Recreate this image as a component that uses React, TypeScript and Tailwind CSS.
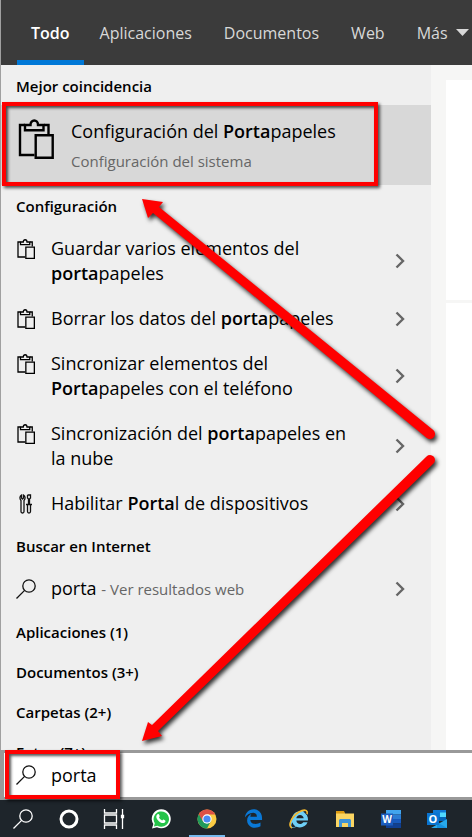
import type { ReactNode } from "react";
import { FaEdgeLegacy, FaInternetExplorer } from "react-icons/fa";

function PasteIcon({ size, weight }: { size: number; weight: number }) {
  return (
    <svg width={size * 0.9} height={size} viewBox="0 0 36 40" fill="none" stroke="#000" strokeWidth={weight} aria-hidden="true">
      <path d="M16.500 36H2V6h5M26 6h4.500v9" />
      <path d="M7 11.300V6h5.500c0-6 7.500-6 7.500 0h5.500v5.300z" />
      <path d="M17.700 16.200h17v22.500h-17z" />
    </svg>
  );
}

function ToolsIcon() {
  return (
    <svg className="ml-px" width="18" height="20" viewBox="0 0 18 20" fill="none" stroke="#111" strokeWidth="1.300" aria-hidden="true">
      <path d="M4.500 1v3l1 1 1-1V1c2 1 2 4 .5 5.500v11c0 2-3 2-3 0v-11C2.500 5 2.500 2 4.500 1z" />
      <path d="M10.500 1h3v3l-1 1v5.500M11.500 10.500V5l-1-1V1M9 10.500h6M10.500 10.500v7c0 2 3 2 3 0v-7" />
    </svg>
  );
}

function SearchIcon({ color }: { color: string }) {
  return (
    <svg width="20" height="20" viewBox="0 0 20 20" fill="none" stroke={color} strokeWidth="1.300" aria-hidden="true">
      <circle cx="13" cy="7" r="6.200" />
      <path d="M8.600 11.400L.5 19.500" />
    </svg>
  );
}

function Chevron() {
  return (
    <svg className="flex-none" width="10" height="16" viewBox="0 0 10 16" fill="none" stroke="#666" strokeWidth="2.400" aria-hidden="true">
      <path d="M1.500 1.500L8 8l-6.500 6.500" />
    </svg>
  );
}

function Heading({ children }: { children: ReactNode }) {
  return <h2 className="flex h-10 flex-none items-center px-[15px] pt-[2px] text-[15px] leading-5 font-semibold">{children}</h2>;
}

function Result({ icon, children }: { icon: ReactNode; children: ReactNode }) {
  return (
    <button type="button" className="flex w-full flex-none items-center pt-[11px] pr-[26px] pb-[9px] pl-[15px] text-left">
      <span className="flex h-[25px] w-[35px] flex-none items-center self-start">{icon}</span>
      <span className="mr-10 flex-1 text-[18px] leading-[25px]">{children}</span>
      <Chevron />
    </button>
  );
}

const small = (
  <span className="pl-px">
    <PasteIcon size={20} weight={2.6} />
  </span>
);

function Tab({ active, children }: { active?: boolean; children: ReactNode }) {
  return (
    <button
      type="button"
      role="tab"
      aria-selected={!!active}
      className={
        active
          ? "h-full flex-none border-y-5 border-transparent border-b-[#0078d7] px-[14px] font-semibold text-white"
          : "flex h-full flex-none items-center gap-2 px-4 text-[#d8d8d8]"
      }
    >
      {children}
    </button>
  );
}

function Task({ label, active, children }: { label: string; active?: boolean; children: ReactNode }) {
  return (
    <button
      type="button"
      aria-label={label}
      className="flex h-full w-[46px] flex-none flex-col items-center justify-between"
    >
      <span className="flex h-[37px] items-center">{children}</span>
      {active && <span className="-mt-[2px] h-[2px] w-9 flex-none bg-[#76b9ed]" />}
    </button>
  );
}

function Annotations() {
  return (
    <>
      <div className="pointer-events-none absolute top-[102px] left-[2px] h-[84px] w-[376px] border-4 border-[#f00] shadow-[2px_2px_3px_#000a,inset_2px_2px_3px_#000a]" />
      <div className="pointer-events-none absolute top-[750px] left-[5px] h-[49px] w-[115px] border-4 border-[#f00] shadow-[2px_2px_3px_#000a,inset_2px_2px_3px_#000a]" />
      <svg
        className="pointer-events-none absolute top-0 left-0 drop-shadow-[2px_3px_2px_#000c]"
        width="472"
        height="800"
        fill="#f00"
        aria-hidden="true"
      >
        <path d="M142 199l21 3-4 5L433.200 430.100a5 5 0 0 1-6.400 7.800L153 213l-5 5z" />
        <path d="M142 741l6-19 4 3L426.500 456.400a5 5 0 0 1 7 7.200L158 731l4 5z" />
      </svg>
    </>
  );
}

export default function App() {
  return (
    <div className="relative flex h-screen flex-col overflow-hidden bg-white font-['Open_Sans','Noto_Sans',sans-serif] text-black">
      <div className="flex min-h-0 flex-1 flex-col border-l border-[#a0a0a0]">
        <div role="tablist" className="flex h-[65px] flex-none overflow-hidden bg-[#3b3b3b] pl-4 text-[16px]">
          <Tab active>Todo</Tab>
          <Tab>Aplicaciones</Tab>
          <Tab>Documentos</Tab>
          <Tab>Web</Tab>
          <Tab>
            Más
            <svg width="13" height="7" viewBox="0 0 13 7" fill="#d8d8d8" aria-hidden="true">
              <path d="M0 0h13L6.500 7z" />
            </svg>
          </Tab>
        </div>
        <div className="flex min-h-0 flex-1">
          <main className="flex w-[430px] flex-none flex-col overflow-hidden bg-[#efefef]">
            <Heading>Mejor coincidencia</Heading>
            <button type="button" className="flex h-20 flex-none items-start bg-[#d8d8d8] pt-[14px] pl-[17px] text-left">
              <span className="w-[53px] flex-none">
                <PasteIcon size={40} weight={2.4} />
              </span>
              <span className="flex flex-col gap-[7px]">
                <span className="text-[18px] leading-[25px]">
                  Configuración del <b className="font-semibold">Porta</b>papeles
                </span>
                <span className="text-[15px] leading-5 text-[#666]">Configuración del sistema</span>
              </span>
            </button>
            <Heading>Configuración</Heading>
            <Result icon={small}>
              Guardar varios elementos del <b className="font-semibold">porta</b>papeles
            </Result>
            <Result icon={small}>
              Borrar los datos del <b className="font-semibold">porta</b>papeles
            </Result>
            <Result icon={small}>
              Sincronizar elementos del <b className="font-semibold">Porta</b>papeles con el teléfono
            </Result>
            <Result icon={small}>
              Sincronización del <b className="font-semibold">porta</b>papeles en la nube
            </Result>
            <Result icon={<ToolsIcon />}>
              Habilitar <b className="font-semibold">Porta</b>l de dispositivos
            </Result>
            <Heading>Buscar en Internet</Heading>
            <Result icon={<SearchIcon color="#111" />}>
              porta <span className="text-[15px] text-[#666]">- Ver resultados web</span>
            </Result>
            <Heading>Aplicaciones (1)</Heading>
            <Heading>Documentos (3+)</Heading>
            <Heading>Carpetas (2+)</Heading>
            <Heading>Fotos (7+)</Heading>
          </main>
          <aside className="flex flex-1 flex-col bg-[#f6f6f5] pt-[15px] pl-[15px]">
            <div className="h-[220px] flex-none bg-white" />
            <div className="mt-[3px] flex-1 bg-white" />
          </aside>
        </div>
      </div>
      <label className="flex h-[50px] flex-none items-center border-y-3 border-l-4 border-[#999] bg-white pl-3">
        <SearchIcon color="#111" />
        <input
          aria-label="Buscar"
          defaultValue="porta"
          className="ml-[15px] min-w-0 flex-1 bg-transparent text-[18px] leading-[25px] outline-none"
        />
      </label>
      <nav className="flex h-[37px] flex-none overflow-hidden bg-[#1e252b]">
        <Task label="Buscar">
          <SearchIcon color="#fff" />
        </Task>
        <Task label="Cortana">
          <svg width="20" height="20" viewBox="0 0 20 20" fill="none" stroke="#fff" strokeWidth="3">
            <circle cx="10" cy="10" r="8" />
          </svg>
        </Task>
        <Task label="Vista de tareas">
          <svg width="24" height="20" viewBox="0 0 24 20" fill="none" stroke="#fff" strokeWidth="1.300">
            <path d="M1.500 0v4h12V0M1.500 20v-4h12v4M1.500 6h12v8h-12zM19.500 0v20" />
            <path d="M18.500 6.500h2v2h-2z" fill="#fff" />
          </svg>
        </Task>
        <Task label="WhatsApp">
          <svg width="20" height="20" viewBox="0 0 20 20">
            <path d="M1 19.500L2.300 15A9.500 9.500 0 1 1 6 18.300z" fill="#fff" />
            <path d="M2.900 17.600L3.800 14.300A7.700 7.700 0 1 1 6.400 16.800z" fill="#25c349" />
            <path d="M6.500 5.200c.7-.5 1.300-.4 1.600.3l.6 1.500c.2.600-.7 1.100-.6 1.500.6 1.300 1.600 2.300 3 2.900.5.100.9-1.100 1.500-.8l1.600.8c.7.400.1 2.200-1.300 2.600-3.300.8-7.800-3.400-7.600-6.500.1-.9.500-1.700 1.200-2.300z" fill="#fff" />
          </svg>
        </Task>
        <Task label="Chrome" active>
          <svg width="20" height="20" viewBox="0 0 20 20">
            <circle cx="10" cy="10" r="9.500" fill="#fbcb43" />
            <path d="M10 10L1.770 5.250A9.500 9.500 0 0 0 10 19.500l4-7.500z" fill="#219a5b" />
            <path d="M1.770 5.250A9.500 9.500 0 0 1 18.230 5.500H10l-4 7z" fill="#de5145" />
            <circle cx="10" cy="10" r="4.700" fill="#fff" />
            <circle cx="10" cy="10" r="3.600" fill="#4a8af4" />
          </svg>
        </Task>
        <Task label="Edge">
          <FaEdgeLegacy size={19} color="#0a78d6" />
        </Task>
        <Task label="Internet Explorer">
          <svg width="20" height="20" viewBox="0 0 20 20">
            <FaInternetExplorer x={1} y={1} size={18} color="#6fd0f7" />
            <path d="M3 19C-2 17 3 7 10 3c5-3 9-2.500 8 2" fill="none" stroke="#f4b92e" strokeWidth="1.600" />
          </svg>
        </Task>
        <Task label="Explorador de archivos">
          <svg width="20" height="18" viewBox="0 0 20 18">
            <path d="M1 1h8l1 2v2H1z" fill="#dc9a12" />
            <path d="M1 3.500h18V17H1z" fill="#fbd562" />
            <path d="M4 17v-7l1-1h10l1 1v7h-3v-4H7v4z" fill="#3f93d8" />
          </svg>
        </Task>
        <Task label="Word">
          <svg width="20" height="18" viewBox="0 0 20 18">
            <path d="M5 0h15v4.500H5z" fill="#41a5ee" />
            <path d="M5 4.500h15V9H5z" fill="#2b7cd3" />
            <path d="M5 9h15v4.500H5z" fill="#185abd" />
            <path d="M5 13.500h15V18H5z" fill="#103f91" />
            <path d="M0 3.500h12v12H0z" fill="#1b5cbe" />
            <text x="6" y="13" textAnchor="middle" fontSize="10" fontWeight="700" fill="#fff">W</text>
          </svg>
        </Task>
        <Task label="Outlook">
          <svg width="20" height="18" viewBox="0 0 20 18">
            <path d="M6 0h13v9H6z" fill="#0f78d4" />
            <path d="M13 2.500h6V7h-6z" fill="#50d9ff" />
            <path d="M6 7h13v4H6z" fill="#0364b8" />
            <path d="M4 18l16-9v9z" fill="#28a8ea" />
            <path d="M20 18L10 12v6z" fill="#1490df" />
            <path d="M0 3h12v12H0z" fill="#0a74d0" />
            <text x="6" y="13" textAnchor="middle" fontSize="11" fontWeight="700" fill="#fff">O</text>
          </svg>
        </Task>
      </nav>
      <Annotations />
    </div>
  );
}
